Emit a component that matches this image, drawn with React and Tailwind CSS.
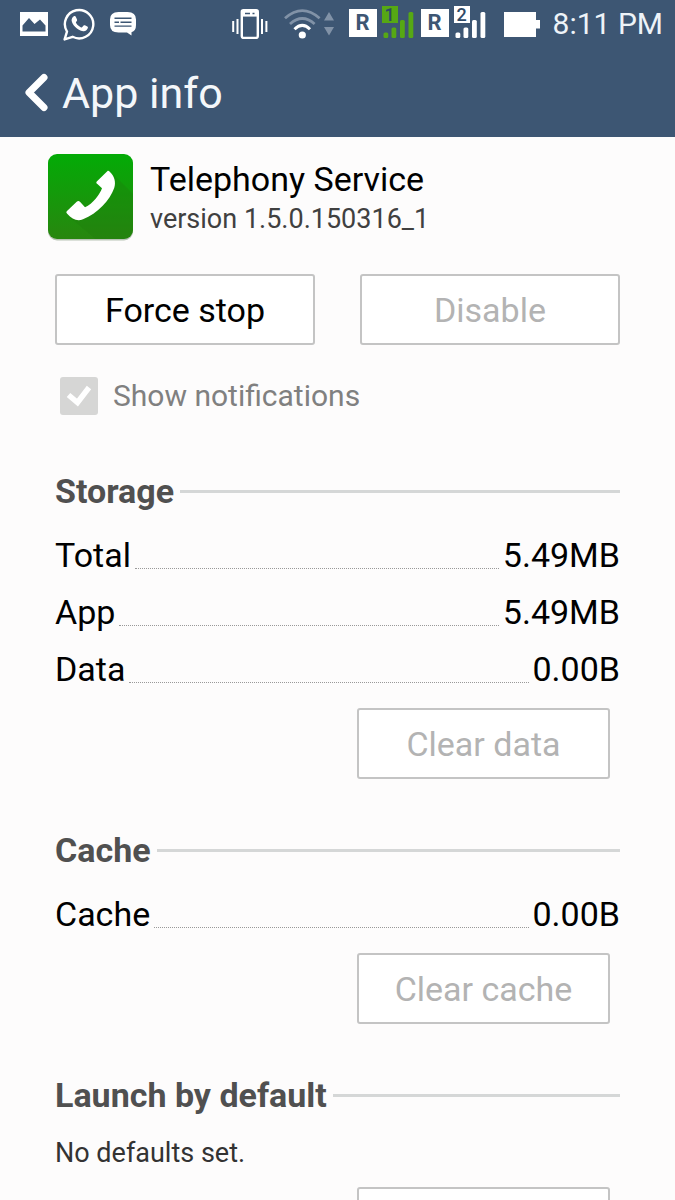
import React from "react";

function PictureIcon() {
  return (
    <svg width="28" height="24" viewBox="0 0 28 24" aria-hidden="true">
      <path fill="#fff" fillRule="evenodd" d="M0 0H28V24H0ZM2.5 19.5H25.5V13.5L20 7.5L14.5 12L9 6L2.5 13.5Z" />
    </svg>
  );
}

function WhatsAppIcon() {
  return (
    <svg width="32" height="34" viewBox="0 0 32 34" fill="none" aria-hidden="true">
      <path
        d="M1.6 32.4L4 24.6A14.2 14.2 0 1 1 9.6 29.8Z"
        stroke="#fff"
        strokeWidth="2.4"
        strokeLinejoin="round"
      />
      <path
        fill="#fff"
        d="M10.8 9.3C11.5 8.8 12.4 8.9 12.8 9.8L14 12.5C14.3 13.3 13.9 14 13.2 14.7C12.8 15.1 12.8 15.5 13.1 16C14.3 18 16 19.5 18.1 20.4C18.6 20.6 19 20.5 19.3 20.1L20.6 18.6C21 18.2 21.4 18.1 21.9 18.3L24.3 19.5C24.9 19.8 25 20.2 24.9 20.8C24.5 22.9 22.4 24.4 20.2 24.2C14.2 23.4 9 17.6 8.6 13.5C8.5 11.8 9.5 10.1 10.8 9.3Z"
      />
    </svg>
  );
}

function ChatIcon() {
  return (
    <svg width="26" height="24" viewBox="0 0 26 24" aria-hidden="true">
      <path fill="#fff" d="M8.5 0H17.5Q26 0 26 7.5V13Q26 19 21.5 20.3V23.5L17 20.5H8.5Q0 20.5 0 13V7.5Q0 0 8.5 0Z" />
      <g stroke="#3d5673" strokeWidth="1.4">
        <path d="M4.5 6.3H21.5M4.5 10.2H9M10.5 10.2H21.5M4.5 14.1H21.5" />
      </g>
    </svg>
  );
}

function VibrateIcon() {
  return (
    <svg width="36" height="30" viewBox="0 0 36 30" fill="none" aria-hidden="true">
      <rect x="9.8" y="1.3" width="16" height="27.6" rx="1.6" stroke="#fff" strokeWidth="2.4" />
      <path d="M10 4.6H25.6" stroke="#fff" strokeWidth="6" />
      <path d="M13 4.5H18M20.5 4.5H22.5" stroke="#3d5673" strokeWidth="1.6" />
      <path d="M1.2 12V23M5.5 10V25M30 10V25M34.4 12V23" stroke="#fff" strokeWidth="2" />
    </svg>
  );
}

function WifiIcon() {
  return (
    <svg width="50" height="30" viewBox="0 0 50 30" fill="none" aria-hidden="true">
      <path d="M1 9.2Q18.3 -6 35.6 9.2" stroke="#8192a7" strokeWidth="2.8" />
      <path d="M6 15Q18.3 4 30.6 15" stroke="#8192a7" strokeWidth="2.8" />
      <path d="M10.5 20.3Q18.3 12.6 26 20.3" stroke="#fff" strokeWidth="3" />
      <circle cx="18.3" cy="26" r="3.6" fill="#fff" />
      <path d="M45 3L50 11.5H40ZM45 26.5L40 18H50Z" fill="#8192a7" />
    </svg>
  );
}

function SignalBars({ green }) {
  return (
    <svg width="32" height="32" viewBox="0 0 32 32" className={green ? "text-[#56a814]" : "text-white"} aria-hidden="true">
      <g fill="currentColor">
        <rect width="16" height="17" />
        <rect x="1.5" y="26.5" width="4.8" height="5.5" rx="1.5" />
        <rect x="9.5" y="21.5" width="4.8" height="10.5" rx="1.5" />
        <rect x="18" y="14" width="4.8" height="18" rx="1.5" />
        <rect x="26.5" y="6" width="4.8" height="26" rx="1.5" />
      </g>
    </svg>
  );
}

function Signal({ slot, green }) {
  return (
    <div className="flex gap-[5px]">
      <span className="mt-[3px] flex h-7 w-7 items-center justify-center bg-white text-[22px] leading-7 font-bold text-[#3d5673]">R</span>
      <div className="relative">
        <SignalBars green={green} />
        <span className="absolute top-0 left-0 w-4 text-center text-[18px] leading-[17px] font-medium text-[#2f4966]">{slot}</span>
      </div>
    </div>
  );
}

function StatusBar() {
  return (
    <div className="flex h-12 items-center justify-between pr-3 pl-5">
      <div className="flex items-center gap-[15px]">
        <PictureIcon />
        <WhatsAppIcon />
        <ChatIcon />
      </div>
      <div className="flex items-center">
        <VibrateIcon />
        <div className="ml-4 flex">
          <WifiIcon />
        </div>
        <div className="mr-[18px] mb-1 ml-[15px] flex gap-[7px]">
          <Signal slot="1" green />
          <Signal slot="2" />
        </div>
        <svg width="36" height="25" viewBox="0 0 36 25" fill="#fff" aria-hidden="true">
          <path d="M0 0H32V8H36V16.5H32V25H0Z" />
        </svg>
        <span className="ml-[13px] text-[30px] leading-9 text-[#eef3f8]">8:11 PM</span>
      </div>
    </div>
  );
}

function AppIcon() {
  return (
    <svg width="86" height="88" viewBox="0 0 86 88" aria-hidden="true">
      <defs>
        <linearGradient id="green" x1="0" y1="0" x2="0" y2="1">
          <stop offset="0" stopColor="#03ab06" />
          <stop offset="1" stopColor="#28860f" />
        </linearGradient>
        <clipPath id="tile">
          <rect width="85" height="85" rx="9" />
        </clipPath>
      </defs>
      <rect y="1.5" width="85" height="85" rx="9" fill="#b9c4b6" />
      <rect width="85" height="85" rx="9" fill="url(#green)" />
      <path clipPath="url(#tile)" fill="#1d7a0c" fillOpacity="0.3" d="M66 21L86 41V86H49L20 62L50 55Z" />
      <path
        fill="#fff"
        d="M59.3 17.3L49 27.2C47.9 28.3 48.2 29 49.4 30.1L54 34.3C51.8 40.5 45 49.8 37 53.3L32.2 48.1C31 46.7 29.9 46.6 28.7 47.8L19 57C18 58 18.3 58.8 19.2 59.7C24 65.5 29.5 67.6 35 65.3C49.5 59.7 62 46 66.2 34C68.2 27.8 66.3 21.8 61.5 17.5C60.7 16.8 60 16.6 59.3 17.3Z"
      />
    </svg>
  );
}

function OutlineButton({ children, className = "", ...props }) {
  return (
    <button
      type="button"
      className={`h-[71px] rounded-[3px] border-2 border-[#c4c4c4] bg-white text-[34px] leading-10 text-black disabled:text-[#b3b3b3] ${className}`}
      {...props}
    >
      {children}
    </button>
  );
}

function SectionHeading({ children }) {
  return (
    <h2 className="flex h-12 items-center gap-[6px] text-[34px] leading-10 font-bold text-[#505050]">
      {children}
      <span className="h-[3px] flex-1 bg-[#d5d7d7]" />
    </h2>
  );
}

function Row({ label, value }) {
  return (
    <div className="flex h-[57px] items-center gap-1 pb-[2px] text-[34px] leading-10">
      <dt>{label}</dt>
      <span className="h-[29px] flex-1 border-b border-dotted border-[#999]" />
      <dd>{value}</dd>
    </div>
  );
}

export default function App() {
  return (
    <div className="flex h-screen flex-col overflow-hidden bg-[#fdfcfc] font-['Roboto',sans-serif] text-black">
      <header className="h-[137px] shrink-0 bg-[#3d5673] text-white">
        <StatusBar />
        <div className="flex h-[90px] items-center pl-6">
          <a href="#back" aria-label="Back">
            <svg width="26" height="40" viewBox="0 0 26 40" fill="none" stroke="#fff" strokeWidth="7" strokeLinecap="round" strokeLinejoin="round" aria-hidden="true">
              <path d="M20 4.5L5 19.5L20 34.5" />
            </svg>
          </a>
          <h1 className="ml-3 text-[43px] leading-[48px] text-[#f4f7fa]">App info</h1>
        </div>
      </header>

      <main className="min-h-0 flex-1 overflow-y-auto px-[55px] [scrollbar-width:none]">
        <div className="-ml-[7px] flex items-center gap-4 pt-[17px]">
          <AppIcon />
          <div>
            <p className="text-[34px] leading-[42px]">Telephony Service</p>
            <p className="text-[27px] leading-[38px] text-[#404040]">version 1.5.0.150316_1</p>
          </div>
        </div>

        <div className="mt-8 grid grid-cols-2 gap-[45px]">
          <OutlineButton>Force stop</OutlineButton>
          <OutlineButton disabled>Disable</OutlineButton>
        </div>

        <label className="mt-8 ml-[5px] flex w-fit items-center gap-[15px] text-[30px] leading-[38px] text-[#808080]">
          <span className="relative flex">
            <input type="checkbox" defaultChecked disabled className="h-[38px] w-[38px] appearance-none rounded-[3px] bg-[#d6d6d5]" />
            <svg viewBox="0 0 38 38" className="absolute inset-0" fill="none" stroke="#fff" strokeWidth="5.5" aria-hidden="true">
              <path d="M8.5 18L17.5 25.5L29 10.5" />
            </svg>
          </span>
          Show notifications
        </label>

        <section className="mt-[52px]">
          <SectionHeading>Storage</SectionHeading>
          <dl className="mt-3">
            <Row label="Total" value="5.49MB" />
            <Row label="App" value="5.49MB" />
            <Row label="Data" value="0.00B" />
          </dl>
          <div className="mt-[10px] mr-[10px] flex justify-end">
            <OutlineButton disabled className="w-[253px]">Clear data</OutlineButton>
          </div>
        </section>

        <section className="mt-[47px]">
          <SectionHeading>Cache</SectionHeading>
          <dl className="mt-3">
            <Row label="Cache" value="0.00B" />
          </dl>
          <div className="mt-[10px] mr-[10px] flex justify-end">
            <OutlineButton disabled className="w-[253px]">Clear cache</OutlineButton>
          </div>
        </section>

        <section className="mt-[47px]">
          <SectionHeading>Launch by default</SectionHeading>
          <p className="py-4 text-[27px] leading-9 text-[#333]">No defaults set.</p>
          <div className="mr-[10px] flex justify-end pb-12">
            <OutlineButton disabled aria-label="Clear defaults" className="w-[253px]" />
          </div>
        </section>
      </main>
    </div>
  );
}
